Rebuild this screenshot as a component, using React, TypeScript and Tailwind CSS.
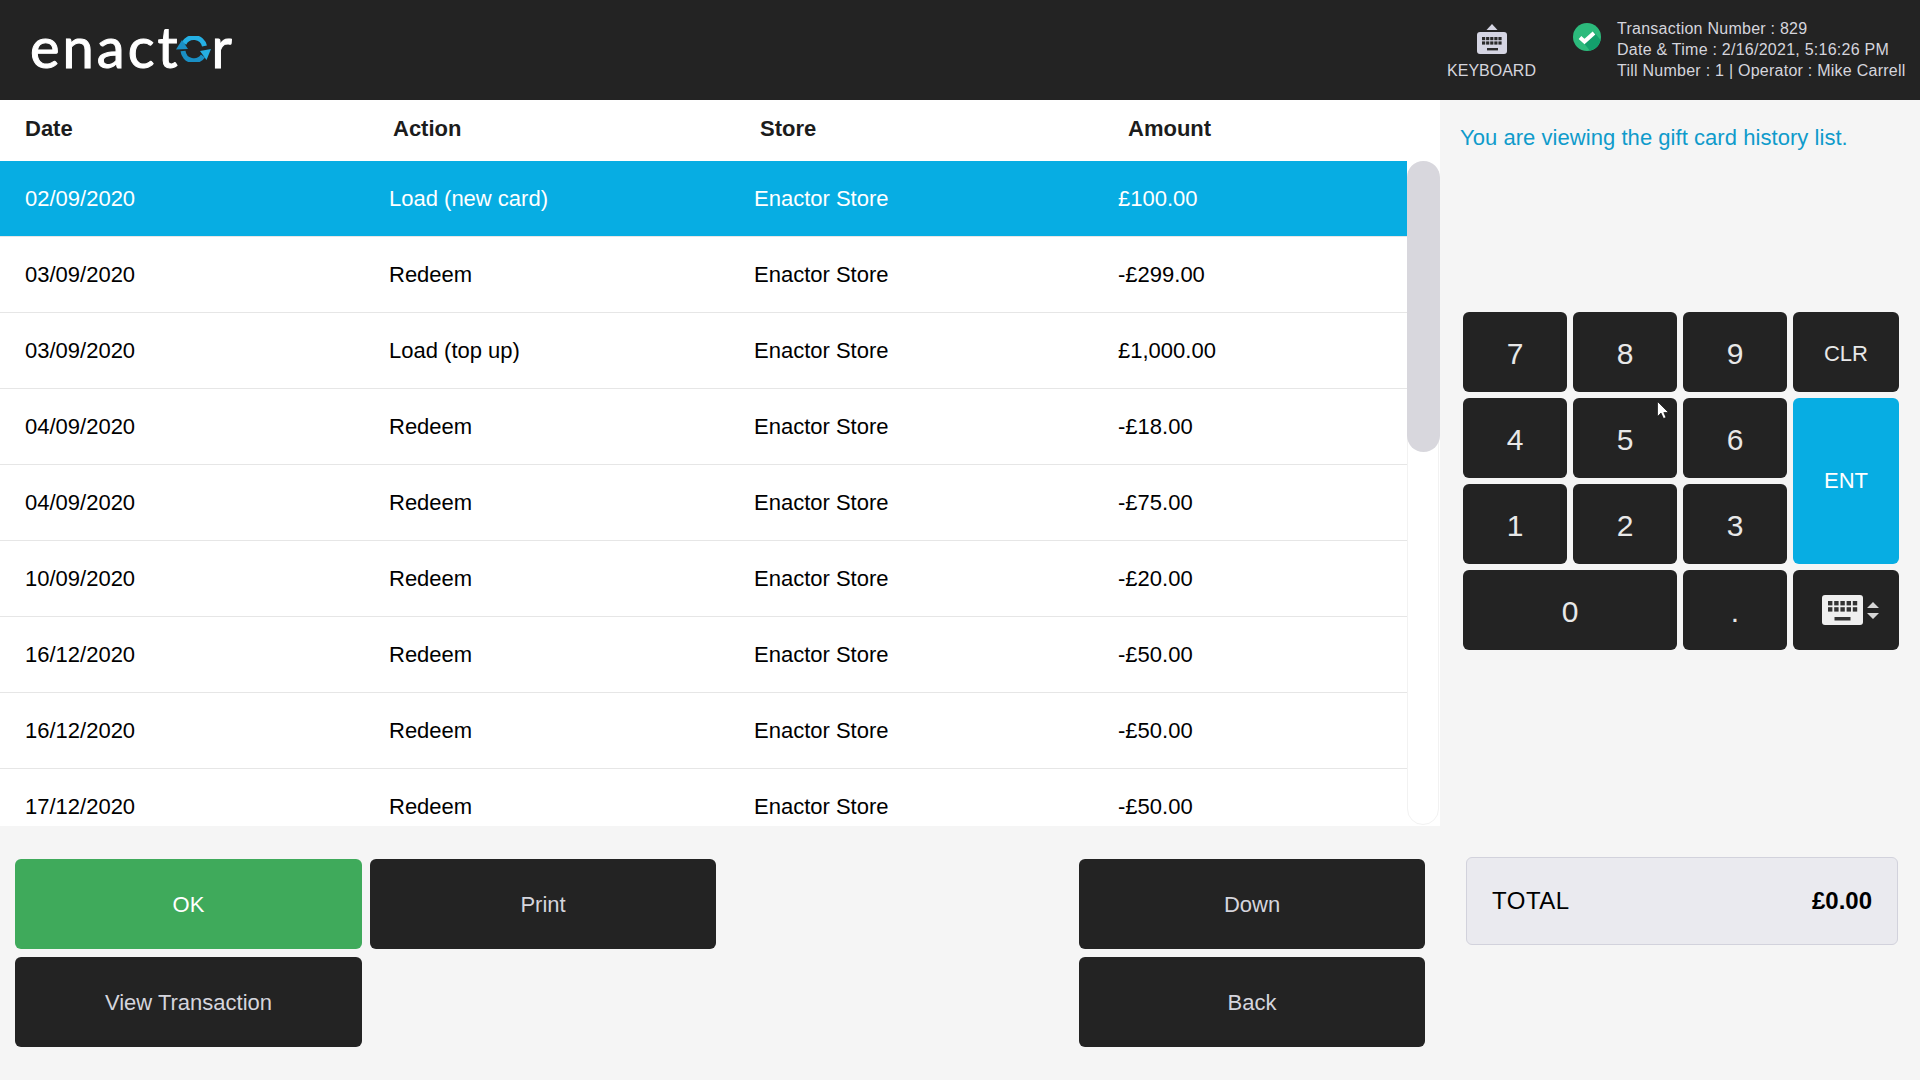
const rows = [
  ["02/09/2020", "Load (new card)", "£100.00"],
  ["03/09/2020", "Redeem", "-£299.00"],
  ["03/09/2020", "Load (top up)", "£1,000.00"],
  ["04/09/2020", "Redeem", "-£18.00"],
  ["04/09/2020", "Redeem", "-£75.00"],
  ["10/09/2020", "Redeem", "-£20.00"],
  ["16/12/2020", "Redeem", "-£50.00"],
  ["16/12/2020", "Redeem", "-£50.00"],
  ["17/12/2020", "Redeem", "-£50.00"],
];

const KeyboardGlyph = () => {
  const keys = [];
  for (let r = 0; r < 2; r++) {
    for (let c = 0; c < 5; c++) {
      keys.push(<rect key={`${r}-${c}`} x={6 + c * 6.2} y={6 + r * 6.2} width="4.4" height="4.4" fill="#333" />);
    }
  }
  return (
    <svg viewBox="0 0 41 30" className="w-[41px] h-[30px]">
      <rect width="41" height="30" rx="3" fill="#efefef" />
      {keys}
      <rect x="12.5" y="22" width="16" height="3.5" fill="#333" />
    </svg>
  );
};

const Logo = () => (
  <div className="flex items-baseline mb-[6px] text-[56px] leading-none text-white font-['Lato',sans-serif] tracking-[3px] [-webkit-text-stroke:1px_white]">
    <span>enact</span>
    <svg viewBox="0 0 35 26" className="w-[35px] h-[26px] self-end mb-[13px] -ml-[4px]">
      <path d="M8 7.5 A11 11 0 0 1 28.5 10" fill="none" stroke="#25b0e4" strokeWidth="5" />
      <path d="M24 15 L35 13 L30.5 24 Z" fill="#25b0e4" />
      <path d="M27 20 A11 11 0 0 1 7 15" fill="none" stroke="#1a8fc4" strokeWidth="5" />
      <path d="M0 13.5 L12 13 L6 4 Z" fill="#1a8fc4" />
    </svg>
    <span>r</span>
  </div>
);

const Key = ({ label, className = "" }: { label: React.ReactNode; className?: string }) => (
  <button className={`rounded-[6px] flex items-center justify-center ${className}`}>{label}</button>
);

const Digit = ({ label, className = "" }: { label: string; className?: string }) => (
  <Key label={label} className={`bg-[#232323] text-[#e8e8e8] pt-[2px] ${className}`} />
);

const ActionButton = ({ label, className = "" }: { label: string; className?: string }) => (
  <button className={`h-[90px] rounded-[6px] text-[22px] ${className}`}>{label}</button>
);

export default function App() {
  return (
    <div className="h-screen w-[1920px] overflow-hidden bg-[#f5f5f5] font-['Liberation_Sans',Arial,sans-serif]">
      <header className="h-[100px] bg-[#232323] flex items-center pl-[30px] text-[#d5d5dd]">
        <Logo />
        <div className="ml-auto w-[91px] flex flex-col items-center pt-[24px] self-start">
          <svg viewBox="0 0 30 30" className="w-[30px] h-[30px]">
            <path d="M15 0 L20.5 6 H9.5 Z" fill="#d5d5e3" />
            <rect y="8" width="30" height="22" rx="3" fill="#d5d5e3" />
            {[0, 1, 2, 3, 4].map((c) => (
              <g key={c} fill="#2a2a2a">
                <rect x={5 + c * 4.1} y="13" width="3.2" height="3.2" />
                <rect x={5 + c * 4.1} y="17.4" width="3.2" height="3.2" />
              </g>
            ))}
            <rect x="10" y="24" width="11" height="2.4" fill="#2a2a2a" />
          </svg>
          <span className="text-[16px] leading-[18px] mt-[8px]">KEYBOARD</span>
        </div>
        <div className="self-start mt-[23px] ml-[36px] w-[28px] h-[28px]">
          <svg viewBox="0 0 28 28" className="w-[28px] h-[28px]">
            <circle cx="14" cy="14" r="14" fill="#2cba7c" />
            <path d="M10 19 L21 9 L27.5 17 A14 14 0 0 1 17 27.7 Z" fill="#13a06c" />
            <path d="M7 14.5 L11.5 18.5 L21 10" fill="none" stroke="#fff" strokeWidth="4" />
          </svg>
        </div>
        <div className="self-start mt-[18px] ml-[16px] w-[303px] text-[16px] leading-[21px] tracking-[0.25px] whitespace-nowrap">
          <div>Transaction Number : 829</div>
          <div>Date &amp; Time : 2/16/2021, 5:16:26 PM</div>
          <div>Till Number : 1 | Operator : Mike Carrell</div>
        </div>
      </header>

      <div className="flex">
        <div className="w-[1440px]">
          {/* table */}
          <div className="h-[726px] bg-white overflow-hidden">
            <div className="h-[61px] pb-[4px] grid grid-cols-[368px_367px_368px_1fr] pl-[25px] items-center text-[22px] font-bold text-[#1c1c1c]">
              <span>Date</span>
              <span>Action</span>
              <span>Store</span>
              <span>Amount</span>
            </div>
            <div className="flex h-[665px]">
              <div className="w-[1407px] overflow-hidden">
                {rows.map((r, i) => (
                  <div
                    key={i}
                    className={`h-[76px] shrink-0 grid grid-cols-[364px_365px_364px_1fr] pl-[25px] items-center text-[22px] border-b border-[#e6e6e6] ${
                      i === 0 ? "bg-[#07ade3] text-white" : "text-black"
                    }`}
                  >
                    <span>{r[0]}</span>
                    <span>{r[1]}</span>
                    <span>Enactor Store</span>
                    <span>{r[2]}</span>
                  </div>
                ))}
              </div>
              <div className="w-[32px] h-[664px] rounded-[16px] border border-[#f2f2f2]">
                <div className="w-[33px] h-[291px] -ml-px -mt-px rounded-[17px] bg-[#d8d7dd]" />
              </div>
            </div>
          </div>

          {/* action buttons */}
          <div className="grid grid-cols-[347px_346px_347px_346px] gap-[8px] pl-[15px] pt-[33px]">
            <ActionButton label="OK" className="bg-[#3faa5b] text-white" />
            <ActionButton label="Print" className="bg-[#232323] text-[#d5d5dd]" />
            <div />
            <ActionButton label="Down" className="bg-[#232323] text-[#d5d5dd]" />
            <ActionButton label="View Transaction" className="bg-[#232323] text-[#d5d5dd]" />
            <div />
            <div />
            <ActionButton label="Back" className="bg-[#232323] text-[#d5d5dd]" />
          </div>
        </div>

        {/* right panel */}
        <div className="flex-1">
          <div className="h-[212px] pl-[20px] pt-[25px] text-[22px] leading-[26px] tracking-[0.05px] text-[#0f9bcb]">
            You are viewing the gift card history list.
          </div>
          <div className="relative ml-[23px] grid grid-cols-[104px_104px_104px_106px] grid-rows-[80px_80px_80px_80px] gap-[6px] text-[30px]">
            <Digit label="7" />
            <Digit label="8" />
            <Digit label="9" />
            <Digit label="CLR" className="text-[22px]" />
            <Digit label="4" />
            <Digit label="5" />
            <Digit label="6" />
            <Key label="ENT" className="row-span-2 bg-[#07ade3] text-white text-[22px] pb-[2px]" />
            <Digit label="1" />
            <Digit label="2" />
            <Digit label="3" />
            <Digit label="0" className="col-span-2" />
            <Digit label="." />
            <Key
              className="bg-[#232323]"
              label={
                <span className="flex items-center gap-[4px] ml-[9px]">
                  <KeyboardGlyph />
                  <svg viewBox="0 0 12 17" className="w-[12px] h-[17px]">
                    <path d="M6 0 L12 6 H0 Z M0 11 H12 L6 17 Z" fill="#d5d5d5" />
                  </svg>
                </span>
              }
            />
            {/* mouse pointer */}
            <svg viewBox="0 0 12 18" className="absolute left-[194px] top-[89px] w-[12px] h-[18px]">
              <path d="M0.5 0.5 V15.5 L4 12 L6.5 17.5 L9 16.5 L6.8 11.5 H11.5 Z" fill="#fff" stroke="#000" strokeWidth="0.6" />
            </svg>
          </div>
          <div className="mt-[207px] ml-[26px] w-[432px] h-[88px] rounded-[6px] bg-[#eaeaef] border border-[#d2d2dc] flex items-center justify-between px-[25px] text-[24px] text-black">
            <span className="tracking-[0.5px]">TOTAL</span>
            <span className="font-bold">£0.00</span>
          </div>
        </div>
      </div>
    </div>
  );
}
